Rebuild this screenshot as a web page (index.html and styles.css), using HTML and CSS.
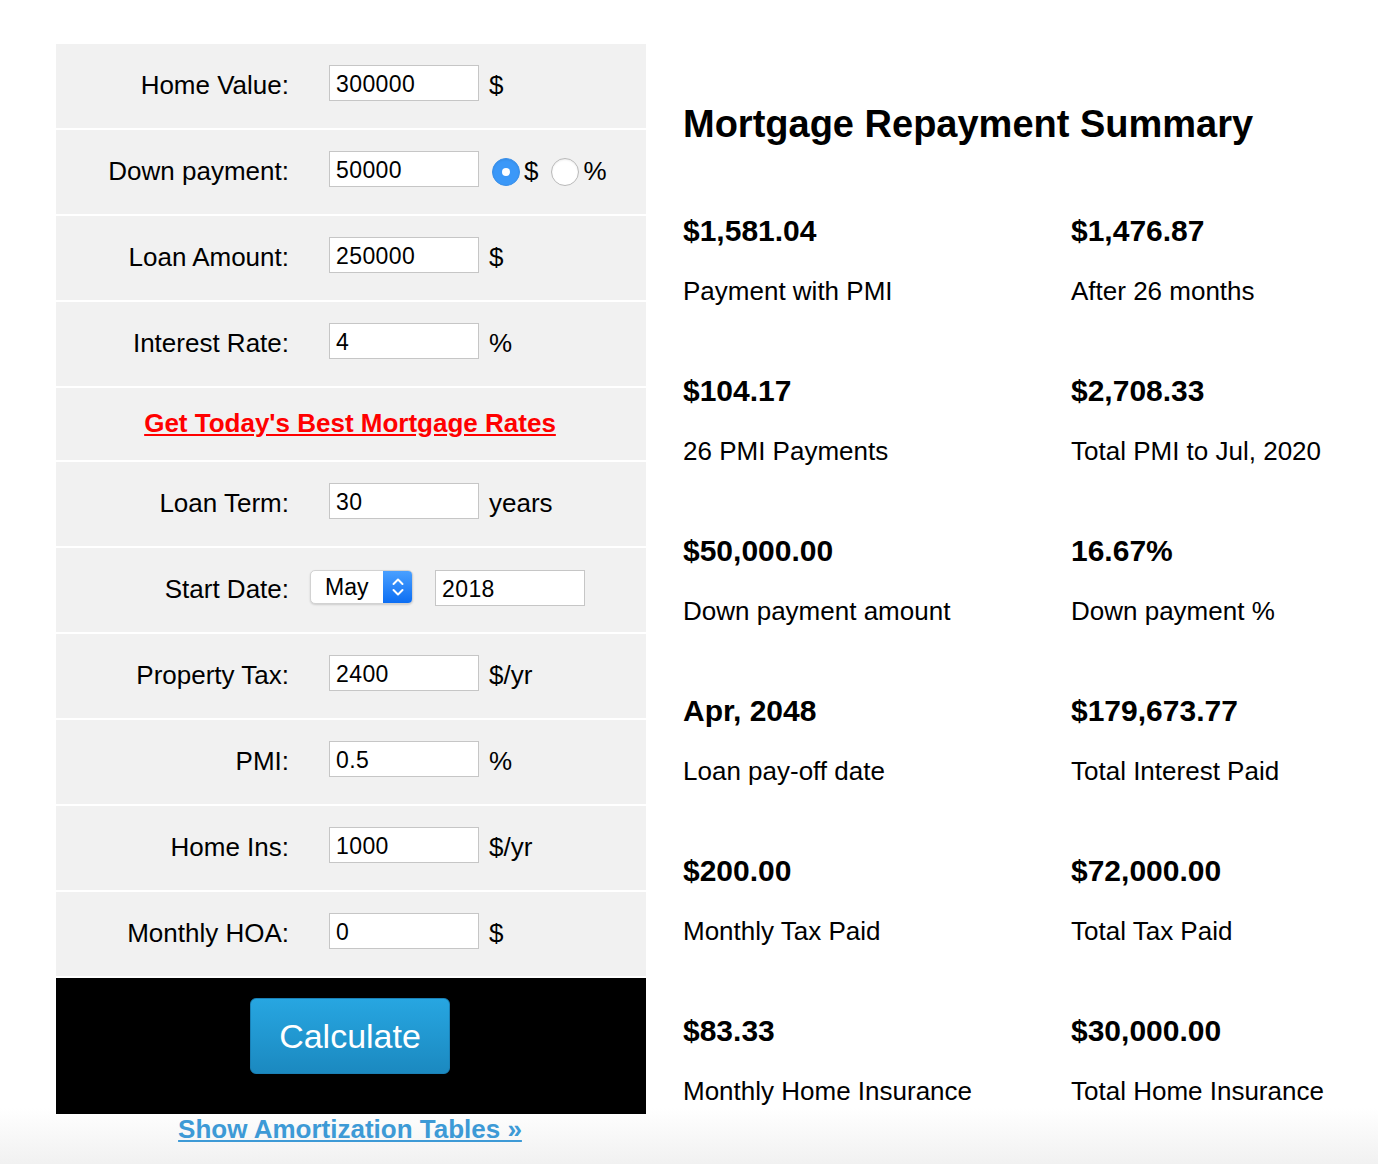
FILE: index.html
```html
<!DOCTYPE html>
<html>
<head>
<meta charset="utf-8">
<title>Mortgage Calculator</title>
<link rel="stylesheet" href="styles.css">
</head>
<body>
<div class="page">
  <div class="calc">
    <div class="row">
      <div class="label">Home Value:</div>
      <div class="field"><span class="input">300000</span><span class="unit">$</span></div>
    </div>
    <div class="row">
      <div class="label">Down payment:</div>
      <div class="field">
        <span class="input">50000</span>
        <span class="radio checked"></span><span class="rtext">$</span>
        <span class="radio"></span><span class="rtext">%</span>
      </div>
    </div>
    <div class="row">
      <div class="label">Loan Amount:</div>
      <div class="field"><span class="input">250000</span><span class="unit">$</span></div>
    </div>
    <div class="row">
      <div class="label">Interest Rate:</div>
      <div class="field"><span class="input">4</span><span class="unit">%</span></div>
    </div>
    <div class="row link-row">
      <a class="rates" href="#">Get Today's Best Mortgage Rates</a>
    </div>
    <div class="row">
      <div class="label">Loan Term:</div>
      <div class="field"><span class="input">30</span><span class="unit">years</span></div>
    </div>
    <div class="row">
      <div class="label">Start Date:</div>
      <div class="field date-field">
        <span class="select"><span class="select-text">May</span><span class="select-arrows"><svg width="14" height="22" viewBox="0 0 14 22"><path d="M2.5 8 L7 3.5 L11.5 8" fill="none" stroke="#fff" stroke-width="2" stroke-linecap="round" stroke-linejoin="round"/><path d="M2.5 14 L7 18.5 L11.5 14" fill="none" stroke="#fff" stroke-width="2" stroke-linecap="round" stroke-linejoin="round"/></svg></span></span>
        <span class="input year">2018</span>
      </div>
    </div>
    <div class="row">
      <div class="label">Property Tax:</div>
      <div class="field"><span class="input">2400</span><span class="unit">$/yr</span></div>
    </div>
    <div class="row">
      <div class="label">PMI:</div>
      <div class="field"><span class="input">0.5</span><span class="unit">%</span></div>
    </div>
    <div class="row">
      <div class="label">Home Ins:</div>
      <div class="field"><span class="input">1000</span><span class="unit">$/yr</span></div>
    </div>
    <div class="row">
      <div class="label">Monthly HOA:</div>
      <div class="field"><span class="input">0</span><span class="unit">$</span></div>
    </div>
    <div class="action">
      <button class="calc-btn">Calculate</button>
    </div>
    <div class="amort"><a href="#">Show Amortization Tables »</a></div>
  </div>

  <div class="summary">
    <h1>Mortgage Repayment Summary</h1>
    <div class="grid">
      <div class="item"><div class="val">$1,581.04</div><div class="cap">Payment with PMI</div></div>
      <div class="item"><div class="val">$1,476.87</div><div class="cap">After 26 months</div></div>
      <div class="item"><div class="val">$104.17</div><div class="cap">26 PMI Payments</div></div>
      <div class="item"><div class="val">$2,708.33</div><div class="cap">Total PMI to Jul, 2020</div></div>
      <div class="item"><div class="val">$50,000.00</div><div class="cap">Down payment amount</div></div>
      <div class="item"><div class="val">16.67%</div><div class="cap">Down payment %</div></div>
      <div class="item"><div class="val">Apr, 2048</div><div class="cap">Loan pay-off date</div></div>
      <div class="item"><div class="val">$179,673.77</div><div class="cap">Total Interest Paid</div></div>
      <div class="item"><div class="val">$200.00</div><div class="cap">Monthly Tax Paid</div></div>
      <div class="item"><div class="val">$72,000.00</div><div class="cap">Total Tax Paid</div></div>
      <div class="item"><div class="val">$83.33</div><div class="cap">Monthly Home Insurance</div></div>
      <div class="item"><div class="val">$30,000.00</div><div class="cap">Total Home Insurance</div></div>
    </div>
  </div>
</div>
</body>
</html>
```

FILE: styles.css
```css
html, body {
  margin: 0;
  padding: 0;
}
body {
  min-height: 1164px;
  background: linear-gradient(to bottom, #ffffff 0, #ffffff 1108px, #f1f1f1 1164px);
  font-family: "Liberation Sans", Arial, Helvetica, sans-serif;
  color: #000;
}
.page {
  display: flex;
  align-items: flex-start;
  padding: 44px 0 0 56px;
}
.calc {
  width: 590px;
  flex: none;
}
.row {
  height: 84px;
  margin-bottom: 2px;
  background: #f1f1f1;
  display: flex;
  align-items: center;
}
.label {
  width: 233px;
  text-align: right;
  font-size: 26px;
  line-height: 26px;
  padding-bottom: 3px;
  flex: none;
}
.field {
  display: flex;
  align-items: center;
  margin-left: 40px;
}
.input {
  box-sizing: border-box;
  width: 150px;
  height: 36px;
  background: #fff;
  border: 1px solid #c6c6c6;
  font-size: 23px;
  letter-spacing: 0.4px;
  line-height: 36px;
  padding-left: 6px;
  margin-bottom: 6px;
}
.unit {
  font-size: 26px;
  line-height: 26px;
  margin-left: 10px;
  padding-bottom: 3px;
}
.radio {
  box-sizing: border-box;
  width: 28px;
  height: 28px;
  border-radius: 50%;
  background: #fff;
  border: 1px solid #b9b9b9;
  box-shadow: inset 0 1px 2px rgba(0,0,0,0.08);
  margin-left: 13px;
  display: inline-block;
  position: relative;
}
.radio.checked {
  background: #3b98f8;
  border-color: #3a8fe8;
}
.radio.checked::after {
  content: "";
  position: absolute;
  left: 9px;
  top: 9px;
  width: 8px;
  height: 8px;
  border-radius: 50%;
  background: #fff;
}
.rtext {
  font-size: 26px;
  line-height: 26px;
  margin-left: 4px;
  padding-bottom: 2px;
}
.link-row {
  height: 72px;
  justify-content: center;
}
.rates {
  color: #ff0000;
  font-weight: bold;
  font-size: 26px;
  line-height: 26px;
  text-decoration: underline;
  margin-right: 2px;
  padding-bottom: 2px;
}
.date-field {
  margin-left: 21px;
}
.select {
  box-sizing: border-box;
  width: 103px;
  height: 34px;
  border-radius: 5px;
  background: #fff;
  border: 1px solid #d2d2d2;
  box-shadow: 0 1px 2px rgba(0,0,0,0.15);
  display: flex;
  align-items: center;
  overflow: hidden;
  margin-bottom: 6px;
}
.select-text {
  flex: 1;
  font-size: 23px;
  padding-left: 14px;
}
.select-arrows {
  width: 29px;
  height: 100%;
  background: linear-gradient(to bottom, #4aa0ff, #0c6ef3);
  display: flex;
  align-items: center;
  justify-content: center;
}
.input.year {
  margin-left: 22px;
  margin-bottom: 4px;
}
.action {
  height: 136px;
  background: #000;
  display: flex;
  justify-content: center;
  align-items: flex-start;
}
.calc-btn {
  margin-top: 20px;
  margin-right: 2px;
  width: 200px;
  height: 76px;
  border-radius: 6px;
  border: 1px solid #1a80b6;
  background: linear-gradient(to bottom, #27a6e1, #1b89c0);
  color: #fff;
  font-family: "Liberation Sans", Arial, Helvetica, sans-serif;
  font-size: 34px;
  padding: 0;
}
.amort {
  text-align: center;
  padding-top: 2px;
  padding-right: 2px;
  line-height: 26px;
}
.amort a {
  color: #3d9ad6;
  font-weight: bold;
  font-size: 26px;
  text-decoration: underline;
}
.summary {
  margin-left: 37px;
  flex: 1;
}
.summary h1 {
  margin: 61px 0 0 0;
  font-size: 38px;
  line-height: 38px;
  font-weight: bold;
}
.grid {
  display: grid;
  grid-template-columns: 388px 1fr;
  row-gap: 72px;
  margin-top: 73px;
}
.val {
  font-size: 30px;
  line-height: 30px;
  font-weight: bold;
}
.cap {
  margin-top: 32px;
  font-size: 26px;
  line-height: 26px;
}
```
